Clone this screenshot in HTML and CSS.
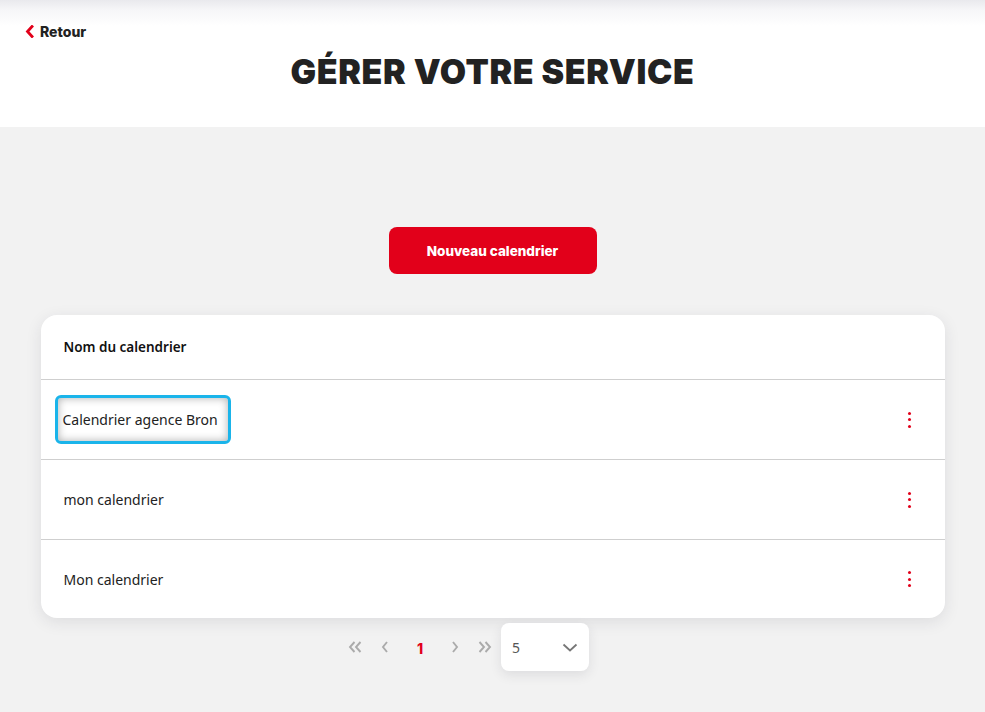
FILE: index.html
```html
<!DOCTYPE html>
<html lang="fr">
<head>
<meta charset="utf-8">
<title>Gérer votre service</title>
<link rel="stylesheet" href="styles.css">
</head>
<body>
<header class="top">
  <a class="back" href="#">
    <svg class="back-icon" width="9" height="13" viewBox="0 0 9 13"><path d="M7 1.5 L2.5 6.5 L7 11.5" fill="none" stroke="#e2001a" stroke-width="2.8" stroke-linecap="square"/></svg>
    <span>Retour</span>
  </a>
  <h1 class="title">GÉRER VOTRE SERVICE</h1>
</header>
<main class="content">
  <div class="actions">
    <button class="btn-primary">Nouveau calendrier</button>
  </div>
  <section class="card">
    <div class="card-head">Nom du calendrier</div>
    <div class="row">
      <span class="name focused">Calendrier agence Bron</span>
      <span class="kebab"><i></i><i></i><i></i></span>
    </div>
    <div class="row">
      <span class="name">mon calendrier</span>
      <span class="kebab"><i></i><i></i><i></i></span>
    </div>
    <div class="row">
      <span class="name">Mon calendrier</span>
      <span class="kebab"><i></i><i></i><i></i></span>
    </div>
  </section>
  <nav class="pager">
    <span class="pg-btn"><svg width="14" height="12" viewBox="0 0 14 12"><path d="M6.5 1 L2 6 L6.5 11 M12.5 1 L8 6 L12.5 11" fill="none" stroke="#ababab" stroke-width="1.9"/></svg></span>
    <span class="pg-btn"><svg width="8" height="12" viewBox="0 0 8 12"><path d="M6 1 L2 6 L6 11" fill="none" stroke="#ababab" stroke-width="1.9"/></svg></span>
    <span class="pg-num">1</span>
    <span class="pg-btn"><svg width="8" height="12" viewBox="0 0 8 12"><path d="M2 1 L6 6 L2 11" fill="none" stroke="#ababab" stroke-width="1.9"/></svg></span>
    <span class="pg-btn"><svg width="14" height="12" viewBox="0 0 14 12"><path d="M1.5 1 L6 6 L1.5 11 M7.5 1 L12 6 L7.5 11" fill="none" stroke="#ababab" stroke-width="1.9"/></svg></span>
    <div class="select">
      <span>5</span>
      <svg width="16" height="9" viewBox="0 0 16 9"><path d="M1.5 1.5 L8 7.5 L14.5 1.5" fill="none" stroke="#777" stroke-width="1.8"/></svg>
    </div>
  </nav>
</main>
</body>
</html>
```
FILE: styles.css
```css
* { box-sizing: border-box; }
html, body { margin: 0; padding: 0; }
body {
  background: #f2f2f2;
  font-family: "Noto Sans", "Open Sans", sans-serif;
  color: #222;
  width: 985px;
  height: 712px;
  overflow: hidden;
}
.top {
  height: 127px;
  background: linear-gradient(#e9e9ed 0px, #f6f6f8 10px, #ffffff 26px);
  padding-top: 20px;
}
.back {
  display: flex;
  align-items: center;
  gap: 6px;
  margin-left: 25px;
  text-decoration: none;
  color: #222;
  font-family: Inter, "Noto Sans", sans-serif;
  font-weight: 800;
  font-size: 14px;
  height: 22px;
  width: max-content;
}
.back-icon { display: block; }
.title {
  margin: 8px 0 0;
  text-align: center;
  font-family: Inter, "Noto Sans", sans-serif;
  font-weight: 900;
  font-size: 34px;
  letter-spacing: 0.6px;
  line-height: 44px;
  color: #222;
}
.content {
  display: flex;
  flex-direction: column;
  align-items: center;
  padding-top: 100px;
}
.actions { display: flex; justify-content: center; }
.btn-primary {
  width: 208px;
  height: 47px;
  border: none;
  border-radius: 8px;
  background: #e2001a;
  color: #fff;
  font-family: Inter, "Noto Sans", sans-serif;
  font-weight: 800;
  font-size: 13.5px;
  cursor: pointer;
}
.card {
  margin-top: 41px;
  width: 904px;
  background: #fff;
  border-radius: 16px;
  box-shadow: 0 4px 16px rgba(40, 40, 60, 0.10);
  overflow: hidden;
}
.card-head {
  height: 65px;
  display: flex;
  align-items: center;
  padding-left: 23px;
  font-weight: 600;
  font-size: 13.5px;
  color: #111;
  border-bottom: 1px solid #cfcfcf;
}
.row {
  height: 80px;
  display: flex;
  align-items: center;
  justify-content: space-between;
  padding-left: 23px;
  padding-right: 34px;
  font-size: 14px;
  border-bottom: 1px solid #cfcfcf;
}
.row:last-child { border-bottom: none; height: 78px; }
.name { display: inline-block; }
.focused {
  margin-left: -9px;
  padding: 12px 10px 12px 5px;
  border: 3px solid #1ab4ea;
  border-radius: 6px;
  box-shadow: inset 0 0 8px rgba(0, 0, 0, 0.32);
}
.kebab {
  display: flex;
  flex-direction: column;
  gap: 3.5px;
}
.kebab i {
  display: block;
  width: 3px;
  height: 3px;
  background: #e2001a;
  border-radius: 50%;
}
.pager {
  display: flex;
  align-items: center;
  margin-top: 5px;
  margin-right: 56px;
}
.pg-btn {
  width: 30px;
  display: flex;
  justify-content: center;
}
.pg-num {
  width: 40px;
  text-align: center;
  color: #e2001a;
  font-family: Inter, "Noto Sans", sans-serif;
  font-weight: 800;
  font-size: 14px;
  padding-top: 3px;
}
.select {
  margin-left: 1px;
  width: 88px;
  height: 48px;
  background: #fff;
  border-radius: 8px;
  box-shadow: 0 4px 12px rgba(40, 40, 60, 0.10);
  display: flex;
  align-items: center;
  justify-content: space-between;
  padding: 0 11px 0 11px;
  font-size: 14px;
  color: #555;
}
```
